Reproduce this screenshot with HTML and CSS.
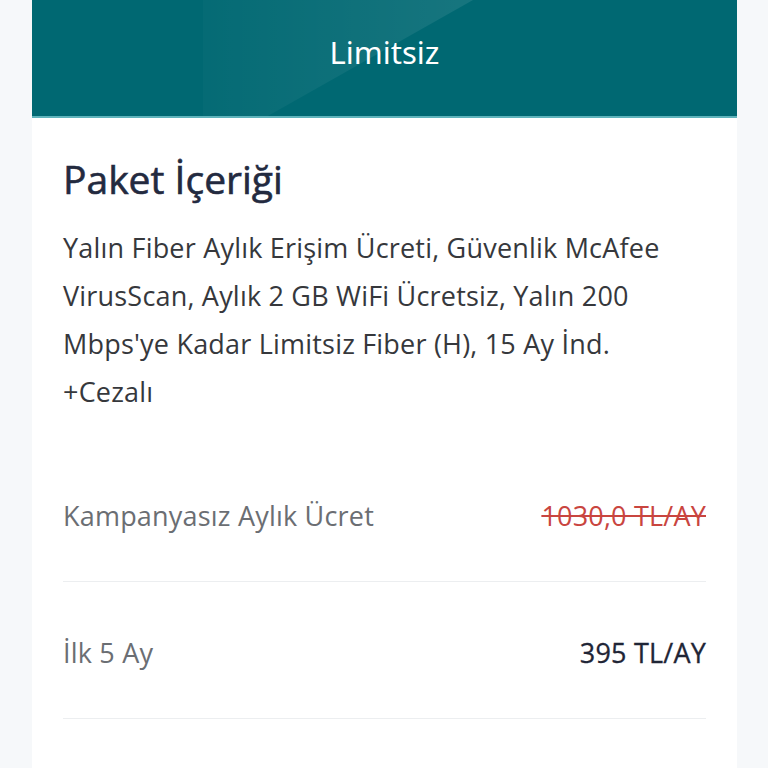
FILE: index.html
```html
<!DOCTYPE html>
<html lang="tr">
<head>
    <meta charset="UTF-8">
    <title>Limitsiz</title>
    <meta name="viewport" content="width=device-width, initial-scale=1.0">
    <link rel="stylesheet" href="styles.css">
</head>
<body>
    <div class="card">
        <div class="card-header">
            <span class="card-title">Limitsiz</span>
        </div>
        <div class="card-body">
            <h2 class="section-title">Paket İçeriği</h2>
            <p class="package-desc">Yalın Fiber Aylık Erişim Ücreti, Güvenlik McAfee VirusScan, Aylık 2 GB WiFi Ücretsiz, Yalın 200 Mbps'ye Kadar Limitsiz Fiber (H), 15 Ay İnd. +Cezalı</p>
            <div class="price-list">
                <div class="price-row">
                    <span class="price-label">Kampanyasız Aylık Ücret</span>
                    <span class="price-value old">1030,0 TL/AY</span>
                </div>
                <div class="price-row">
                    <span class="price-label">İlk 5 Ay</span>
                    <span class="price-value">395 TL/AY</span>
                </div>
            </div>
        </div>
    </div>
</body>
</html>
```

FILE: styles.css
```css
body {
    margin: 0;
    background-color: #f6f8fa;
    font-family: "Open Sans", "Noto Sans", sans-serif;
}
.card {
    width: 705px;
    margin-left: 32px;
    background-color: #fff;
    min-height: 768px;
}
.card-header {
    position: relative;
    overflow: hidden;
    height: 118px;
    background-color: #006872;
    border-bottom: 2px solid #5fb3bb;
    display: flex;
    justify-content: center;
    padding-top: 30px;
    box-sizing: border-box;
}
.card-header:before {
    content: "";
    position: absolute;
    top: 0;
    left: 171px;
    width: 270px;
    height: 100%;
    background: linear-gradient(90deg, rgba(255,255,255,0.02), rgba(255,255,255,0.09));
    clip-path: polygon(0 0, 100% 0, 24% 100%, 0 100%);
}
.card-title {
    position: relative;
    color: #fff;
    font-family: "Noto Sans", sans-serif;
    font-size: 31px;
    line-height: 44px;
}
.card-body {
    padding: 0 31px;
}
.section-title {
    margin: 36px 0 0;
    font-size: 39px;
    line-height: 50px;
    font-weight: 400;
    -webkit-text-stroke: 0.6px #232a3f;
    color: #232a3f;
}
.package-desc {
    margin: 20px 0 0;
    font-size: 27px;
    line-height: 48px;
    letter-spacing: 0.2px;
    color: #36383c;
}
.price-row {
    display: flex;
    justify-content: space-between;
    align-items: flex-start;
    height: 137px;
    padding-top: 55px;
    border-bottom: 1px solid #eceef0;
    box-sizing: border-box;
    font-size: 27px;
    line-height: 32px;
    letter-spacing: 0.2px;
}
.price-row:first-child {
    height: 166px;
    padding-top: 84px;
}
.price-label {
    color: #6b6e73;
}
.price-value {
    color: #1f2536;
    -webkit-text-stroke: 0.3px #1f2536;
}
.price-value.old {
    color: #c9453f;
    -webkit-text-stroke: 0;
    text-decoration: line-through;
}
```
